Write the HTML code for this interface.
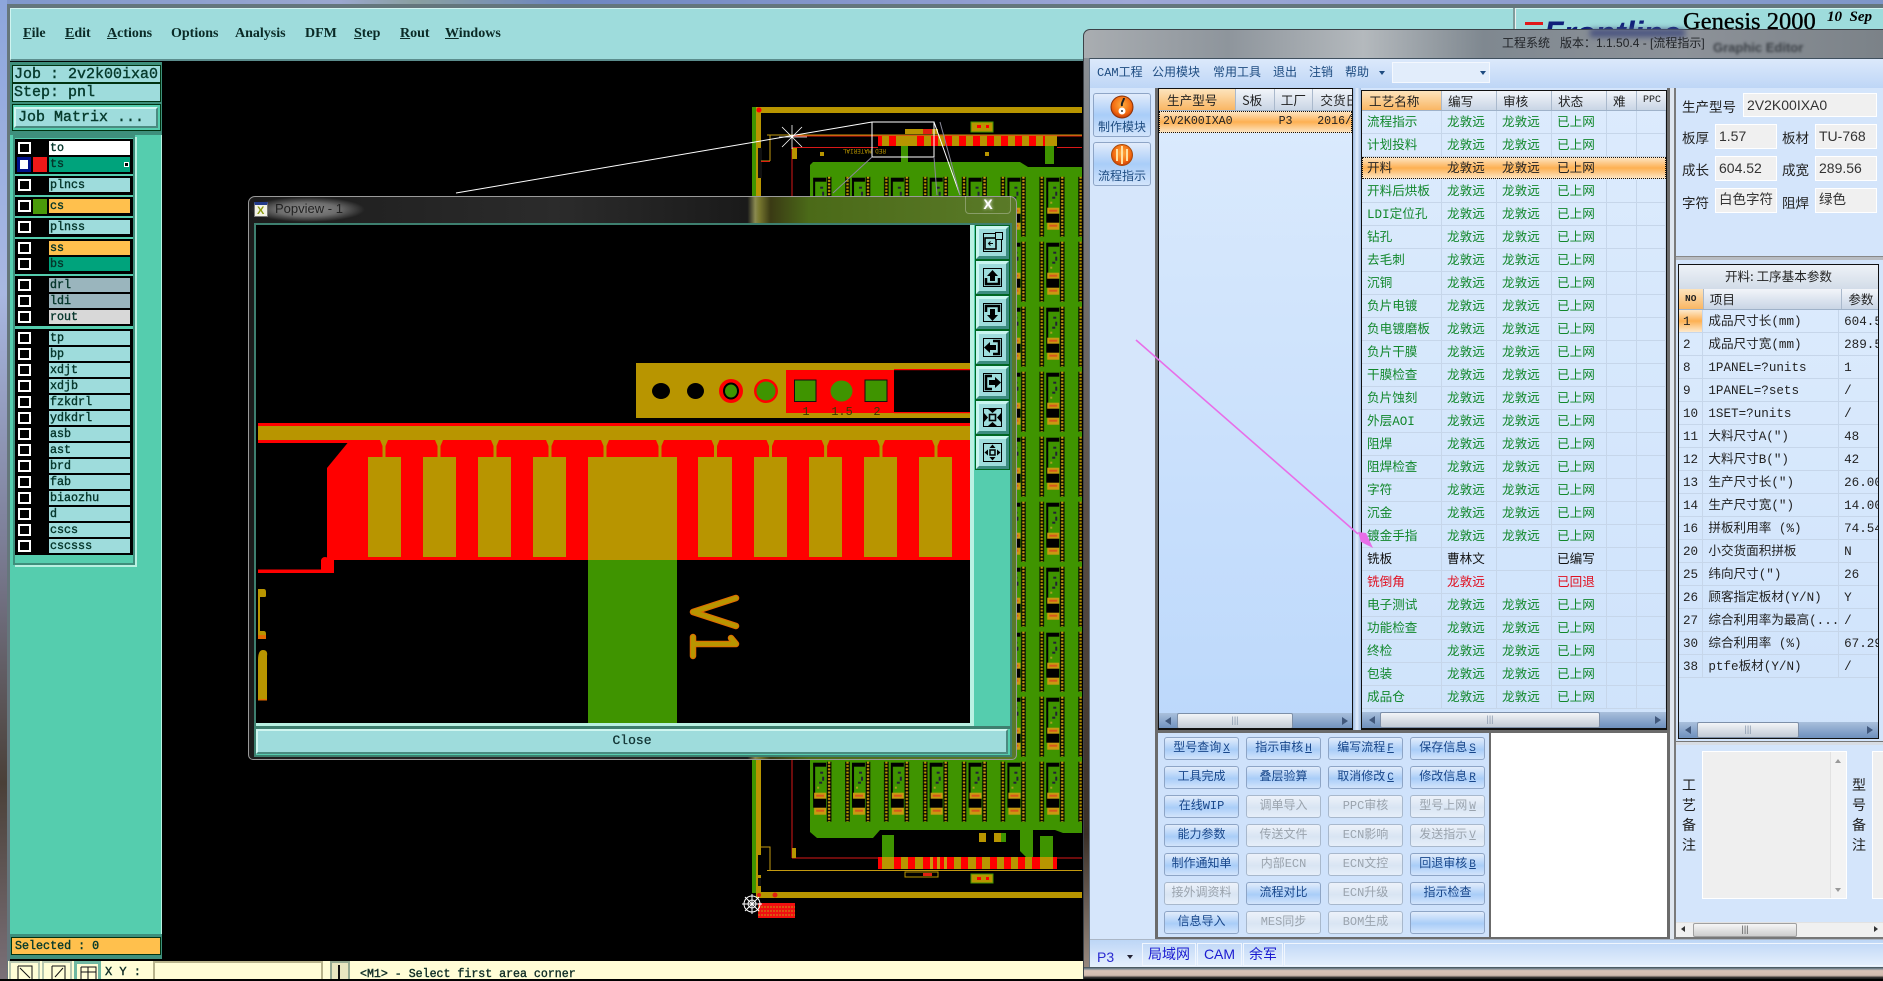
<!DOCTYPE html>
<html lang="zh"><head><meta charset="utf-8"><title>Genesis 2000</title>
<style>
*{box-sizing:border-box}
html,body{margin:0;padding:0;width:1883px;height:979px;overflow:hidden;background:#000}
.a{position:absolute}
svg.a{left:0;top:0}
.mn{position:absolute;top:25px;font:bold 14px/18px "Liberation Serif",serif;color:#0a2a26}
.mn u{text-decoration:underline}
.mono{font-family:"Liberation Mono",monospace;font-weight:normal;-webkit-text-stroke:.4px #063a2c;color:#063a2c}
.lbl{position:absolute;left:49px;width:81px;height:14px;font:normal 11.7px/14px "Liberation Mono",monospace;-webkit-text-stroke:.4px #05352a;color:#05352a;padding-left:1px;background:#9edcdc}
.cb{position:absolute;left:18px;width:13px;height:12px;border:2px solid #fff;background:#000}
.blk{position:absolute;left:15px;width:118px;background:#000}
.cn{font-family:"Liberation Mono","Noto Sans CJK SC",sans-serif}
.san{font-family:"Liberation Sans","Noto Sans CJK SC",sans-serif}
.pb{position:absolute;left:976px;width:33px;height:33px;background:#9edcdc;border:3px solid;border-color:#c9f6f0 #3d8c80 #3d8c80 #c9f6f0;outline:1px solid #062}
.pb svg{position:absolute;left:-3px;top:-3px}
.r{display:flex;height:23px;border-bottom:1px solid #c6d6ea;font:12.6px/24px "Liberation Mono","Noto Sans CJK SC",sans-serif;color:#12882c}
.r span{display:block;border-right:1px solid #c6d6ea;overflow:hidden;white-space:nowrap;padding-left:5px;height:22px}
.t2 .r span:nth-child(1){width:80px}.t2 .r span:nth-child(2),.t2 .r span:nth-child(3),.t2 .r span:nth-child(4){width:55px}.t2 .r span:nth-child(5){width:30px}.t2 .r span:nth-child(6){width:29px}
.t2 .r.k{color:#111}.t2 .r.x{color:#e01020}
.sel{background:linear-gradient(#fde9cc,#fdb052 50%,#fde9cc);color:#222!important;outline:1px dotted #111;outline-offset:-1px;height:22px;margin-bottom:1px;border-bottom:0}
.sel span{border-right-color:transparent}
.hd{display:flex;height:21px;font:12.6px/20px "Noto Sans CJK SC",sans-serif;color:#222;background:linear-gradient(#f2f5fa,#c9d5e5);border-bottom:1px solid #9fb2c9}
.hd span{display:block;border-right:1px solid #aab9cc;overflow:hidden;white-space:nowrap;padding-left:6px}
.org{background:linear-gradient(#fde4bd,#f9b664)}
.t3 .r{color:#222}
.t3 .r span:nth-child(1){width:25px}.t3 .r span:nth-child(2){width:140px}.t3 .r span:nth-child(3){width:40px;border:0}
.sb{position:absolute;height:16px;background:linear-gradient(#a9bfdc,#6e90bd)}
.th{position:absolute;top:0;height:16px;background:linear-gradient(#f2f4f7,#c2cbd6);border:1px solid #7d8fa8;border-radius:2px;color:#8898ac;font:9px/13px "Liberation Sans",sans-serif;text-align:center}
.ar{position:absolute;top:4px;width:0;height:0;border:4px solid transparent}
.L{border-right:6px solid #41587c;border-left:0}.Rr{border-left:6px solid #41587c;border-right:0}
.btn{position:absolute;width:75px;height:23px;border:1px solid #8ea5c6;border-radius:3px;background:linear-gradient(#e2ecfb,#a9cdf8 55%,#d2e4fb);color:#17468a;font:12px/21px "Liberation Mono","Noto Sans CJK SC",sans-serif;text-align:center;white-space:nowrap}
.btn.d{background:linear-gradient(#edf2fa,#d9e5f3 55%,#e6eef9);color:#9aa3ad;border-color:#a8b8cc}
.btn u{font-size:11px;margin-left:2px}
.lb{position:absolute;font:13.5px/18px "Noto Sans CJK SC",sans-serif;color:#222;white-space:nowrap}
.ip{position:absolute;background:#f0f0f0;border:1px solid #fff;font:14px/22px "Liberation Sans","Noto Sans CJK SC",sans-serif;color:#333;padding-left:3px;white-space:nowrap;overflow:hidden}
.mt{position:absolute;top:64px;font:12px/18px "Liberation Mono","Noto Sans CJK SC",sans-serif;color:#1d4b80;white-space:nowrap}
</style></head><body>

<!-- desktop edges -->
<div class="a" style="left:0;top:0;width:1883px;height:4px;background:linear-gradient(90deg,#7f97cc,#9aa7cf 18%,#8aa0a0 22%,#6d86c0 30%,#9ea7d6 60%,#7e96c8)"></div>
<div class="a" style="left:0;top:4px;width:1883px;height:4px;background:#64767c"></div>
<div class="a" style="left:0;top:0;width:7px;height:979px;background:linear-gradient(#8da6dc,#a9b8e2 30%,#7d7f98 55%,#4a4038 80%,#7a7078)"></div>
<div class="a" style="left:7px;top:4px;width:3px;height:975px;background:#66767c"></div>

<!-- menu -->
<div class="a" style="left:10px;top:8px;width:1873px;height:53px;background:#9edcdc;border-top:1px solid #d0f4f0;border-left:1px solid #d0f4f0;border-bottom:2px solid #5c8e8e"></div>
<div class="mn" style="left:23px"><u>F</u>ile</div>
<div class="mn" style="left:65px"><u>E</u>dit</div>
<div class="mn" style="left:107px"><u>A</u>ctions</div>
<div class="mn" style="left:171px">Options</div>
<div class="mn" style="left:235px">Analysis</div>
<div class="mn" style="left:305px">DFM</div>
<div class="mn" style="left:354px"><u>S</u>tep</div>
<div class="mn" style="left:400px"><u>R</u>out</div>
<div class="mn" style="left:445px"><u>W</u>indows</div>
<div class="a" style="left:1513px;top:8px;width:3px;height:24px;background:#7f9c9c;border-right:1px solid #eee"></div>
<div class="a" style="left:1544px;top:15px;font:italic bold 32px/36px 'Liberation Sans',sans-serif;color:#10207a;white-space:nowrap">Frontline</div>
<div class="a" style="left:1525px;top:22px;width:18px;height:3px;background:#e01a1a"></div>
<div class="a" style="left:1683px;top:8px;font:24.5px/28px 'Liberation Serif',serif;color:#000;-webkit-text-stroke:.35px #000;white-space:nowrap">Genesis 2000</div>
<div class="a" style="left:1827px;top:8px;font:italic bold 15px/18px 'Liberation Serif',serif;color:#000;white-space:pre">10  Sep</div>

<!-- left panel -->
<div class="a" style="left:10px;top:62px;width:153px;height:897px;background:#55cdae;border-right:2px solid #b9f1e2"></div>
<div class="a" style="left:10px;top:62px;width:153px;height:73px;background:#3e8f7c"></div>
<div class="a mono" style="left:12px;top:65px;width:149px;height:18px;background:#9edcdc;border:1px solid #031;font-size:15px;line-height:17px;padding-left:1px;white-space:pre">Job : 2v2k00ixa0</div>
<div class="a mono" style="left:12px;top:83px;width:149px;height:19px;background:#9edcdc;border:1px solid #031;font-size:15px;line-height:17px;padding-left:1px;white-space:pre">Step: pnl</div>
<div class="a" style="left:12px;top:104px;width:149px;height:27px;background:#55cdae;border:1px solid #031"></div>
<div class="a mono" style="left:14px;top:107px;width:144px;height:21px;background:#9edcdc;border:2px solid;border-color:#d0f6f0 #4a8a80 #4a8a80 #d0f6f0;font-size:15px;line-height:17px;padding-left:2px;white-space:pre">Job Matrix ...</div>

<div class="a" style="left:13px;top:135px;width:122px;height:430px;background:#55cdae;border:2px solid #3e8f7c;border-top-width:3px;box-shadow:2px 2px 0 #b9f1e2"></div>
<div class="blk" style="top:139px;height:35px"></div>
<div class="blk" style="top:176px;height:19px"></div>
<div class="blk" style="top:197px;height:19px"></div>
<div class="blk" style="top:218px;height:19px"></div>
<div class="blk" style="top:239px;height:35px"></div>
<div class="blk" style="top:276px;height:50px"></div>
<div class="blk" style="top:329px;height:226px"></div>

<div class="cb" style="top:142px"></div><div class="lbl" style="top:141px;background:#fff">to</div>
<div class="a" style="left:17px;top:157px;width:14px;height:15px;background:#00108a;padding:3px"><div style="width:8px;height:9px;background:#fff"></div></div>
<div class="a" style="left:33px;top:157px;width:14px;height:15px;background:#f01818"></div>
<div class="lbl" style="top:157px;height:15px;background:#00a37c">ts</div>
<div class="a" style="left:124px;top:162px;width:5px;height:5px;border:1px solid #fff;background:#000"></div>
<div class="cb" style="top:179px"></div><div class="lbl" style="top:178px">plncs</div>
<div class="cb" style="top:200px"></div><div class="a" style="left:33px;top:199px;width:14px;height:15px;background:#4a9a0a"></div><div class="lbl" style="top:199px;background:#ffc04d">cs</div>
<div class="cb" style="top:221px"></div><div class="lbl" style="top:220px">plnss</div>
<div class="cb" style="top:242px"></div><div class="lbl" style="top:241px;background:#ffc04d">ss</div>
<div class="cb" style="top:258px"></div><div class="lbl" style="top:257px;background:#00a37c">bs</div>
<div class="cb" style="top:279px"></div><div class="lbl" style="top:278px;background:#9ab5bd">drl</div>
<div class="cb" style="top:295px"></div><div class="lbl" style="top:294px;background:#9ab5bd">ldi</div>
<div class="cb" style="top:311px"></div><div class="lbl" style="top:310px;background:#d8d8d8">rout</div>

<div class="cb" style="top:332px"></div><div class="lbl" style="top:331px">tp</div>
<div class="cb" style="top:348px"></div><div class="lbl" style="top:347px">bp</div>
<div class="cb" style="top:364px"></div><div class="lbl" style="top:363px">xdjt</div>
<div class="cb" style="top:380px"></div><div class="lbl" style="top:379px">xdjb</div>
<div class="cb" style="top:396px"></div><div class="lbl" style="top:395px">fzkdrl</div>
<div class="cb" style="top:412px"></div><div class="lbl" style="top:411px">ydkdrl</div>
<div class="cb" style="top:428px"></div><div class="lbl" style="top:427px">asb</div>
<div class="cb" style="top:444px"></div><div class="lbl" style="top:443px">ast</div>
<div class="cb" style="top:460px"></div><div class="lbl" style="top:459px">brd</div>
<div class="cb" style="top:476px"></div><div class="lbl" style="top:475px">fab</div>
<div class="cb" style="top:492px"></div><div class="lbl" style="top:491px">biaozhu</div>
<div class="cb" style="top:508px"></div><div class="lbl" style="top:507px">d</div>
<div class="cb" style="top:524px"></div><div class="lbl" style="top:523px">cscs</div>
<div class="cb" style="top:540px"></div><div class="lbl" style="top:539px">cscsss</div>

<div class="a" style="left:10px;top:934px;width:153px;height:25px;background:#3e8f7c"></div>
<div class="a mono" style="left:11px;top:937px;width:150px;height:18px;background:#ffc04d;border:1px solid #031;font-size:11.7px;line-height:16px;padding-left:3px;white-space:pre">Selected : 0</div>

<!-- PCB canvas -->
<svg class="a" width="1883" height="979" viewBox="0 0 1883 979" style="z-index:1">
<defs>
<pattern id="pm" x="844" y="176.7" width="38.85" height="65" patternUnits="userSpaceOnUse">
<line x1="3.5" y1="0" x2="3.5" y2="60" stroke="#000" stroke-width="4.5"/>
<line x1="3.5" y1="0" x2="3.5" y2="60" stroke="#b89500" stroke-width="2.4" stroke-dasharray="2 1.3"/>
<line x1="24" y1="0" x2="24" y2="60" stroke="#000" stroke-width="4.5"/>
<line x1="24" y1="0" x2="24" y2="60" stroke="#c89a10" stroke-width="2.4" stroke-dasharray="2 1.3"/>
<rect x="8" y="1" width="13" height="4" fill="#000"/>
<rect x="8" y="1" width="2" height="38" fill="#000"/>
<rect x="9" y="31" width="12" height="6" fill="#c89a10"/>
<rect x="11" y="33" width="8" height="2" fill="#d8581a"/>
<rect x="8" y="37" width="13" height="9" fill="#000"/>
<rect x="9" y="46" width="12" height="7" fill="#c89a10"/>
<rect x="11" y="48" width="8" height="2" fill="#d8581a"/>
<rect x="15" y="10" width="3" height="2" fill="#223"/><rect x="17" y="15" width="2" height="4" fill="#223"/><rect x="14" y="20" width="3" height="2" fill="#223"/><rect x="12" y="25" width="2" height="2" fill="#a8a020"/>
</pattern>
<pattern id="st" x="878" y="0" width="14" height="10" patternUnits="userSpaceOnUse"><rect width="14" height="10" fill="#f00"/><rect x="4" width="7" height="10" fill="#b89500"/></pattern>
</defs>
<rect x="162" y="62" width="930" height="899" fill="#000"/>
<!-- frame -->
<rect x="756" y="107" width="326" height="6" fill="#b89500"/>
<rect x="752" y="107" width="4" height="786" fill="#3f9400"/>
<rect x="756" y="113" width="5" height="780" fill="#b89500"/>
<rect x="756" y="892" width="326" height="6" fill="#b89500"/>
<circle cx="759" cy="110" r="2.5" fill="#f00"/><circle cx="775" cy="895" r="2.5" fill="#e02010"/><circle cx="759" cy="895" r="2" fill="#e02010"/>
<rect x="758" y="855" width="4" height="20" fill="#000"/><rect x="758" y="878" width="3" height="8" fill="#111"/><rect x="758" y="148" width="4" height="30" fill="#111"/>
<!-- thin traces -->
<path d="M767 135H1082" stroke="#c49a10" stroke-width="1"/><path d="M790 136H1082" stroke="#e02010" stroke-width="1"/>
<path d="M770 135V161M761 161H770" stroke="#c49a10" fill="none"/><path d="M761 161.5H770" stroke="#e02010"/>
<path d="M792 148V858M792 147.5H878M1057 147.5H1082M792 858H878M1057 858H1082" stroke="#d81818" fill="none"/>
<path d="M767 870.5H1082" stroke="#c49a10"/>
<path d="M761 847H770V870M770 847V870" stroke="#c49a10" fill="none"/>
<rect x="792" y="148" width="5" height="11" fill="#b89500"/><rect x="792" y="848" width="4" height="10" fill="#b89500"/>
<!-- top fingers -->
<rect x="878" y="136" width="179" height="10" fill="url(#st)"/>
<rect x="903" y="136" width="8" height="10" fill="#b89500"/><rect x="1045" y="136" width="9" height="10" fill="#b89500"/>
<rect x="901" y="146" width="7" height="17" fill="#3f9400"/><rect x="1045" y="146" width="9" height="18" fill="#3f9400"/>
<rect x="905" y="129" width="33" height="5" fill="#b89500"/><rect x="923" y="129" width="9" height="5" fill="#e02010"/>
<rect x="971" y="122" width="22" height="10" fill="#b89500" stroke="#3f9400"/><rect x="977" y="125" width="4" height="3" fill="#f00"/><rect x="986" y="125" width="3" height="3" fill="#f00"/>
<rect x="820" y="152" width="4" height="4" fill="#b89500"/><rect x="985" y="152" width="4" height="4" fill="#b89500"/>
<text x="838" y="155" font-family="Liberation Mono,monospace" font-size="6" fill="#b89500" transform="rotate(180 862 152)">RED MATERIAL</text>
<!-- board -->
<path d="M813 162H1020L1028 167H1082V833H1063L1055 830H1033V857H1026L1020 851V830H880L873 838H817L810 832V165Z" fill="#3f9400"/>
<rect x="812" y="176.7" width="270" height="646.5" fill="url(#pm)"/>
<!-- bottom fingers -->
<rect x="878" y="857" width="179" height="12" fill="#f00"/>
<rect x="882" y="857" width="12" height="12" fill="#b89500"/><rect x="901" y="857" width="7" height="12" fill="#b89500"/><rect x="915" y="857" width="8" height="12" fill="#b89500"/><rect x="930" y="857" width="3" height="12" fill="#c89a10"/><rect x="937" y="857" width="3" height="12" fill="#c89a10"/><rect x="944" y="857" width="3" height="12" fill="#c89a10"/><rect x="954" y="857" width="7" height="12" fill="#b89500"/><rect x="968" y="857" width="8" height="12" fill="#b89500"/><rect x="982" y="857" width="8" height="12" fill="#b89500"/><rect x="997" y="857" width="7" height="12" fill="#b89500"/><rect x="1011" y="857" width="7" height="12" fill="#b89500"/><rect x="1025" y="857" width="7" height="12" fill="#b89500"/><rect x="1040" y="857" width="13" height="12" fill="#b89500"/>
<rect x="882" y="835" width="12" height="22" fill="#3f9400"/><rect x="1040" y="836" width="13" height="21" fill="#3f9400"/>
<rect x="979" y="833" width="7" height="9" fill="#b89500"/><rect x="994" y="833" width="7" height="9" fill="#b89500"/><rect x="1001" y="833" width="5" height="9" fill="#3f9400"/>
<rect x="905" y="872" width="33" height="5" fill="none" stroke="#b89500"/><rect x="923" y="873" width="9" height="3" fill="#e02010"/>
<rect x="971" y="874" width="22" height="9" fill="#b89500" stroke="#3f9400"/><rect x="977" y="877" width="4" height="3" fill="#f00"/><rect x="986" y="877" width="3" height="3" fill="#f00"/>
<rect x="758" y="903" width="37" height="15" fill="#f01010"/>
<path d="M758 907H795M758 911H795M758 915H795" stroke="#c89a10" stroke-dasharray="2 1"/>
<!-- cursor -->
<g stroke="#fff" fill="none"><circle cx="752" cy="904" r="8"/><circle cx="752" cy="904" r="4"/><path d="M742 904H762M752 894V914M745 897L759 911M759 897L745 911"/></g>
<!-- selection -->
<g stroke="#fff" fill="none" stroke-width="1"><path d="M456 193L872 122H934V157H872V122M934 122L960 195"/><path d="M779 137H807M792 125V149M782 127L802 147M802 127L782 147" stroke-width=".8"/></g>
<path d="M872 157L833 193M934 157L937 195M940 122L960 195" stroke="#8a8a9a" fill="none" stroke-width="1"/>
</svg>

<!-- bottom bar -->
<div class="a" style="left:8px;top:961px;width:1080px;height:18px;background:#fffdd6;z-index:2"></div>
<div class="a" style="left:9px;top:961px;width:31px;height:18px;background:#fffdd6;border:2px solid #b7c7b0;border-bottom:0;z-index:2"></div>
<div class="a" style="left:42px;top:961px;width:30px;height:18px;background:#fffdd6;border:2px solid #b7c7b0;border-bottom:0;z-index:2"></div>
<div class="a" style="left:74px;top:961px;width:27px;height:18px;background:#fffdd6;border:3px solid #6fb8a2;border-bottom:0;z-index:2"></div>
<svg class="a" width="110" height="18" viewBox="0 0 110 18" style="left:9px;top:961px;z-index:3" fill="none" stroke="#111"><path d="M9 5H23V18M9 5V18M11 7L21 17"/><path d="M43 5H56V18M43 5V18M46 16L54 7"/><path d="M72 6H87V18M72 6V18M79 6V18M72 11H87"/></svg>
<div class="a mono" style="left:105px;top:966px;font-size:12px;line-height:13px;color:#222;z-index:3;white-space:pre">X Y :</div>
<div class="a" style="left:153px;top:961px;width:170px;height:18px;background:#fffdd6;border:2px solid #b8b48c;border-bottom:0;z-index:2"></div>
<div class="a" style="left:330px;top:961px;width:20px;height:18px;background:#e8e6c0;border:2px solid #94a890;border-bottom:0;z-index:2"></div>
<div class="a" style="left:338px;top:965px;width:2px;height:14px;background:#111;z-index:3"></div>
<div class="a mono" style="left:360px;top:968px;font-size:11.6px;line-height:13px;color:#222;z-index:3;white-space:pre">&lt;M1&gt; - Select first area corner</div>

<!-- POPUP -->
<div class="a" style="left:248px;top:196px;width:769px;height:564px;border-radius:7px 7px 5px 5px;border:1px solid #9a9a9a;background:linear-gradient(90deg,#1c1c1c,#2b2b2b 40%,#1a1a1a 65%,#8a8a50 66%,#7a7a30 66.5%,#3a3a14 68%,#4b6a18 73%,#5a7a28 100%);z-index:4"></div>
<div class="a" style="left:250px;top:197px;width:115px;height:25px;background:radial-gradient(closest-side,#8a8a8a 0,#6c6c6c 55%,rgba(60,60,60,0) 100%);z-index:4"></div>
<div class="a" style="left:254px;top:202px;width:14px;height:15px;background:#f3f3e6;border:1px solid #777;border-top:3px solid #223a8a;z-index:5"></div>
<div class="a" style="left:257px;top:206px;font:bold 11px/10px 'Liberation Sans',sans-serif;color:#8a9a10;z-index:5">X</div>
<div class="a" style="left:275px;top:199px;font:13px/20px 'Liberation Sans',sans-serif;color:#222;z-index:5">Popview - 1</div>
<div class="a" style="left:965px;top:196px;width:46px;height:18px;border:1px solid rgba(230,230,230,.35);border-top:0;border-radius:0 0 4px 4px;z-index:5;color:#fff;font:bold 14px/16px 'Liberation Sans',sans-serif;text-align:center;text-shadow:0 0 3px #fff">X</div>
<div class="a" style="left:254px;top:223px;width:758px;height:534px;background:#55cdae;border:2px solid #3e7f6f;z-index:5"></div>
<div class="a" style="left:256px;top:225px;width:754px;height:504px;background:#000;border-right:0;z-index:5"></div>
<div class="a" style="left:970px;top:225px;width:4px;height:503px;background:#b9f1e2;z-index:5"></div>
<div class="a" style="left:974px;top:225px;width:36px;height:503px;background:#55cdae;z-index:5"></div>
<div class="a" style="left:256px;top:723px;width:718px;height:3px;background:#b9f1e2;z-index:5"></div>
<div class="a" style="left:256px;top:726px;width:754px;height:3px;background:#3e7f6f;z-index:5"></div>
<div class="a" style="left:256px;top:729px;width:752px;height:25px;background:#9edcdc;border:2px solid;border-color:#d0f6f0 #4a8a80 #4a8a80 #d0f6f0;z-index:5;text-align:center;font:normal 13px/20px 'Liberation Mono',monospace;-webkit-text-stroke:.3px #133;color:#133">Close</div>

<svg class="a" width="1883" height="979" viewBox="0 0 1883 979" style="z-index:6">
<defs><clipPath id="pc"><rect x="258" y="226" width="712" height="497"/></clipPath></defs>
<g clip-path="url(#pc)">
<rect x="258" y="226" width="712" height="497" fill="#000"/>
<rect x="636" y="363" width="334" height="55" fill="#b89500"/>
<rect x="786" y="370" width="108" height="43" fill="#f00"/>
<rect x="894" y="370" width="76" height="42" fill="#000"/>
<rect x="894" y="369" width="76" height="1.2" fill="#f00"/><rect x="894" y="412" width="76" height="1.2" fill="#f00"/>
<ellipse cx="661" cy="391" rx="9" ry="8" fill="#000"/><ellipse cx="695.5" cy="391" rx="8.5" ry="8" fill="#000"/>
<ellipse cx="731" cy="391" rx="12" ry="12" fill="#f00"/><ellipse cx="731" cy="391" rx="8" ry="8.5" fill="#000"/><ellipse cx="731" cy="391" rx="6" ry="6.5" fill="#3f9400"/>
<ellipse cx="766" cy="391" rx="12" ry="12" fill="#f00"/><ellipse cx="766" cy="391" rx="9.5" ry="9.5" fill="#3f9400"/>
<rect x="794.5" y="380" width="21.5" height="21.5" fill="#3f9400" stroke="#111"/>
<ellipse cx="841.5" cy="391" rx="11" ry="10.5" fill="#3f9400"/>
<rect x="865" y="380" width="22" height="21.5" fill="#3f9400" stroke="#111"/>
<g font-family="Liberation Mono,monospace" font-size="12" fill="#3a3a00" text-anchor="middle"><text x="806" y="415">1</text><text x="842" y="415">1.5</text><text x="877" y="415">2</text></g>
<rect x="258" y="423" width="712" height="3" fill="#f00"/>
<rect x="258" y="426" width="712" height="14" fill="#b89500"/>
<rect x="258" y="440" width="92" height="3" fill="#f00"/>
<path d="M350 440H970V560H327V468Z" fill="#f00"/>
<rect x="321" y="560" width="13" height="13" fill="#f00"/><circle cx="325" cy="561" r="4" fill="#f00"/>
<rect x="258" y="569.5" width="76" height="3.5" fill="#f00"/>
<g fill="#b89500">
<rect x="368" y="457" width="33" height="100"/><rect x="423" y="457" width="33" height="100"/><rect x="478" y="457" width="33" height="100"/><rect x="533" y="457" width="33" height="100"/>
<rect x="588" y="457" width="89" height="103"/>
<rect x="698" y="457" width="34" height="100"/><rect x="754" y="457" width="33" height="100"/><rect x="809" y="457" width="33" height="100"/><rect x="864" y="457" width="33" height="100"/><rect x="919" y="457" width="33" height="100"/>
<path d="M380 440h8l-2.500 6v11h-3v-11zM435 440h8l-2.500 6v11h-3v-11zM491 440h8l-2.500 6v11h-3v-11zM546 440h8l-2.500 6v11h-3v-11zM601 440h8l-2.500 6v17h-3v-17zM656 440h8l-2.500 6v17h-3v-17zM711.500 440h8l-2.500 6v11h-3v-11zM766.500 440h8l-2.500 6v11h-3v-11zM821.600 440h8l-2.500 6v11h-3v-11zM877 440h8l-2.500 6v11h-3v-11zM932 440h8l-2.500 6v11h-3v-11z"/>
</g>
<rect x="588" y="560" width="89" height="163" fill="#3f9400"/>
<g fill="none" stroke-linecap="round" stroke-linejoin="round">
<path d="M736 598L693 612L736 626M736 644H693M693 637V656M736 644L731 638" stroke="#e26a00" stroke-width="6.500"/>
<path d="M736 598L693 612L736 626M736 644H693M693 637V656M736 644L731 638" stroke="#b89500" stroke-width="4.500"/>
</g>
<path d="M258 589h6q2 0 2 3v4q0 1-2 1h-4v34h4q2 0 2 3v4q0 1-2 1h-6z" fill="#b89500"/>
<rect x="258" y="635" width="8" height="4" fill="#e26a00"/>
<path d="M258 660q0-10 5-10t4 6v44h-9z" fill="#b89500"/>
<rect x="258" y="699" width="9" height="1.500" fill="#e26a00"/>
</g>
</svg>

<!-- popup side buttons -->
<div class="pb" style="top:226px;z-index:7"><svg width="33" height="33" viewBox="0 0 33 33" fill="none" stroke="#000"><rect x="7.500" y="7.500" width="18" height="18"/><rect x="9" y="12" width="11" height="11" stroke-width="1.600"/><rect x="19.500" y="6.500" width="7" height="7" fill="#9edcdc"/><path d="M17 17.500H13M14.500 15.500L12.500 17.500L14.500 19.500"/></svg></div>
<div class="pb" style="top:261px;z-index:7"><svg width="33" height="33" viewBox="0 0 33 33"><rect x="7.500" y="7.500" width="18" height="18" fill="none" stroke="#000"/><path d="M10 17V23H23V17" fill="none" stroke="#000" stroke-width="2.500"/><path d="M16.500 9L22 15H19V20H14V15H11Z"/></svg></div>
<div class="pb" style="top:296px;z-index:7"><svg width="33" height="33" viewBox="0 0 33 33"><rect x="7.500" y="7.500" width="18" height="18" fill="none" stroke="#000"/><path d="M10 16V10H23V16" fill="none" stroke="#000" stroke-width="2.500"/><path d="M16.500 25L22 19H19V13H14V19H11Z"/></svg></div>
<div class="pb" style="top:331px;z-index:7"><svg width="33" height="33" viewBox="0 0 33 33"><rect x="7.500" y="7.500" width="18" height="18" fill="none" stroke="#000"/><path d="M17 10H23V23H17" fill="none" stroke="#000" stroke-width="2.500"/><path d="M8 16.500L14 11V14H20V19H14V22Z"/></svg></div>
<div class="pb" style="top:366px;z-index:7"><svg width="33" height="33" viewBox="0 0 33 33"><rect x="7.500" y="7.500" width="18" height="18" fill="none" stroke="#000"/><path d="M16 10H10V23H16" fill="none" stroke="#000" stroke-width="2.500"/><path d="M25 16.500L19 11V14H13V19H19V22Z"/></svg></div>
<div class="pb" style="top:401px;z-index:7"><svg width="33" height="33" viewBox="0 0 33 33"><rect x="7.500" y="7.500" width="18" height="18" fill="none" stroke="#000"/><rect x="13.500" y="13.500" width="6" height="6" fill="none" stroke="#000" stroke-width="1.600"/><path d="M12 8H21L16.500 12ZM12 25H21L16.500 21ZM8 12V21L12 16.500ZM25 12V21L21 16.500Z"/></svg></div>
<div class="pb" style="top:436px;z-index:7"><svg width="33" height="33" viewBox="0 0 33 33"><rect x="7.500" y="7.500" width="18" height="18" fill="none" stroke="#000"/><rect x="14" y="14" width="5" height="5" fill="none" stroke="#000" stroke-width="1.500"/><path d="M16.500 8.500L13.500 12H19.500ZM16.500 24.500L13.500 21H19.500ZM8.500 16.500L12 13.500V19.500ZM24.500 16.500L21 13.500V19.500Z"/></svg></div>

<!-- RIGHT WINDOW -->
<div class="a" style="left:1083px;top:29px;width:800px;height:950px;border-top-left-radius:7px;border:1px solid #3c4248;border-right:0;border-bottom:0;background:linear-gradient(90deg,#a9adb1,#8e959c 18%,#b4b9bd 35%,#7f8890 50%,#8d9299 75%,#7b8288);z-index:8"></div>
<div class="a" style="left:1590px;top:29px;width:95px;height:8px;background:#4a5480;filter:blur(3px);z-index:8"></div>
<div class="a" style="left:1713px;top:40px;font:bold 13px/16px 'Liberation Sans',sans-serif;color:#3a3f45;filter:blur(1.300px);z-index:8">Graphic Editor</div>
<div class="a" style="left:1502px;top:34px;font:12px/18px 'Liberation Sans','Noto Sans CJK SC',sans-serif;color:#1f2226;white-space:pre;z-index:9">工程系统   版本：1.1.50.4 - [流程指示]</div>
<div class="a" style="left:1084px;top:58px;width:5px;height:913px;background:linear-gradient(#8a8f94,#5a5048 50%,#3a3028 85%,#988a80);z-index:8"></div>
<div class="a" style="left:1089px;top:58px;width:794px;height:909px;background:#d4e5fb;border-top:1px solid #40505e;border-left:1px solid #6a7a8a;z-index:9"></div>
<!-- menu strip -->
<div class="a" style="left:1090px;top:59px;width:793px;height:29px;background:linear-gradient(#dce9fb,#bed6f6);z-index:10"></div>
<div class="mt" style="left:1097px;z-index:11">CAM工程</div><div class="mt" style="left:1152px;z-index:11">公用模块</div><div class="mt" style="left:1213px;z-index:11">常用工具</div><div class="mt" style="left:1273px;z-index:11">退出</div><div class="mt" style="left:1309px;z-index:11">注销</div><div class="mt" style="left:1345px;z-index:11">帮助</div>
<div class="a" style="left:1379px;top:71px;border:3.500px solid transparent;border-top:4px solid #1d4b80;border-bottom:0;z-index:11"></div>
<div class="a" style="left:1392px;top:62px;width:98px;height:21px;background:#e2edfb;border:1px solid #f4f8fe;z-index:11"></div>
<div class="a" style="left:1480px;top:71px;border:3px solid transparent;border-top:4px solid #1d4b80;border-bottom:0;z-index:11"></div>

<!-- sidebar -->
<div class="a" style="left:1090px;top:88px;width:65px;height:851px;background:#d6e6fb;z-index:10"></div>
<div class="a" style="left:1093px;top:93px;width:58px;height:44px;border:1px solid #8ea5c6;border-radius:3px;background:linear-gradient(#e2ecfb,#a9cdf8 50%,#d2e4fb);z-index:11;text-align:center;font:12px/16px 'Noto Sans CJK SC',sans-serif;color:#1d4b80;padding-top:25px">制作模块</div>
<div class="a" style="left:1093px;top:142px;width:58px;height:44px;border:1px solid #8ea5c6;border-radius:3px;background:linear-gradient(#e2ecfb,#a9cdf8 50%,#d2e4fb);z-index:11;text-align:center;font:12px/16px 'Noto Sans CJK SC',sans-serif;color:#1d4b80;padding-top:25px">流程指示</div>
<svg class="a" width="60" height="100" viewBox="0 0 60 100" style="left:1093px;top:93px;z-index:12">
<defs><radialGradient id="og" cx=".5" cy=".4" r=".6"><stop offset="0" stop-color="#ffae40"/><stop offset=".7" stop-color="#f26a10"/><stop offset="1" stop-color="#c83a08"/></radialGradient></defs>
<circle cx="29" cy="14" r="11" fill="url(#og)" stroke="#8a3208"/><circle cx="29" cy="18" r="3.500" fill="#fff"/><circle cx="29" cy="18" r="1" fill="#333"/><path d="M29 13C28 9 31 8 31 5" stroke="#222" stroke-width="2" fill="none"/>
<circle cx="29" cy="62" r="10.500" fill="url(#og)" stroke="#a84a08"/><path d="M24 56V68M29 53V71M34 56V68" stroke="#ffe0a0" stroke-width="2"/>
</svg>

<!-- gray frames -->
<div class="a" style="left:1155px;top:88px;width:3px;height:851px;background:#6b6b6b;z-index:10"></div>
<div class="a" style="left:1156px;top:728px;width:515px;height:5px;background:#6b6b6b;z-index:10"></div>
<div class="a" style="left:1489px;top:733px;width:2px;height:206px;background:#6b6b6b;z-index:10"></div>
<div class="a" style="left:1667px;top:88px;width:3px;height:851px;background:#6b6b6b;z-index:10"></div>
<div class="a" style="left:1670px;top:88px;width:4px;height:851px;background:#dfe6ef;z-index:10"></div>
<div class="a" style="left:1155px;top:937px;width:515px;height:2px;background:#6b6b6b;z-index:10"></div>
<div class="a" style="left:1674px;top:256px;width:209px;height:4px;background:#b8bcc2;border-top:1px solid #888;z-index:10"></div>
<div class="a" style="left:1674px;top:741px;width:209px;height:4px;background:#d8dde4;border-top:1px solid #777;z-index:10"></div>
<div class="a" style="left:1674px;top:88px;width:2px;height:851px;background:#7a7a7a;z-index:10"></div>
<div class="a" style="left:1674px;top:937px;width:209px;height:2px;background:#777;z-index:10"></div>

<!-- table 1 -->
<div class="a" style="left:1158px;top:88px;width:195px;height:642px;background:linear-gradient(#dcebfd,#bcd8fb);border:1px solid #111;border-bottom:2px solid #111;z-index:10;overflow:hidden">
 <div class="hd" style="height:22px;line-height:21px"><span class="org" style="width:80px;padding-left:8px">生产型号</span><span style="width:40px;padding-left:6px">S板</span><span style="width:40px;padding-left:6px">工厂</span><span style="width:40px;padding-left:7px;border:0">交货日</span></div>
 <div class="sel" style="height:22px;font:11.600px/22px 'Liberation Mono',monospace;display:flex;color:#222;white-space:pre"><span style="padding-left:4px;width:120px">2V2K00IXA0</span><span style="width:40px;padding-left:4px">P3</span><span style="padding-left:4px">2016/</span></div>
 <div class="sb" style="left:0;top:624px;width:194px"><div class="th" style="left:18px;width:116px">|||</div><div class="ar L" style="left:6px"></div><div class="ar Rr" style="left:183px"></div></div>
</div>
<div class="a" style="left:1353px;top:88px;width:8px;height:642px;background:linear-gradient(90deg,#9dbbe2,#e4effd 50%,#9dbbe2);z-index:10"></div>

<!-- table 2 -->
<div class="a t2" style="left:1361px;top:90px;width:306px;height:640px;background:linear-gradient(#dcebfd,#cfe3fb);border:1px solid #111;border-bottom:2px solid #111;z-index:10;overflow:hidden">
 <div class="hd" style="height:20px"><span class="org" style="width:80px;padding-left:7px">工艺名称</span><span style="width:55px">编写</span><span style="width:55px">审核</span><span style="width:55px">状态</span><span style="width:30px">难</span><span style="width:29px;border:0;font:10px/20px 'Liberation Mono',monospace">PPC</span></div>
 <div class="r"><span>流程指示</span><span>龙敦远</span><span>龙敦远</span><span>已上网</span><span></span><span></span></div>
 <div class="r"><span>计划投料</span><span>龙敦远</span><span>龙敦远</span><span>已上网</span><span></span><span></span></div>
 <div class="r sel"><span>开料</span><span>龙敦远</span><span>龙敦远</span><span>已上网</span><span></span><span></span></div>
 <div class="r"><span>开料后烘板</span><span>龙敦远</span><span>龙敦远</span><span>已上网</span><span></span><span></span></div>
 <div class="r"><span>LDI定位孔</span><span>龙敦远</span><span>龙敦远</span><span>已上网</span><span></span><span></span></div>
 <div class="r"><span>钻孔</span><span>龙敦远</span><span>龙敦远</span><span>已上网</span><span></span><span></span></div>
 <div class="r"><span>去毛刺</span><span>龙敦远</span><span>龙敦远</span><span>已上网</span><span></span><span></span></div>
 <div class="r"><span>沉铜</span><span>龙敦远</span><span>龙敦远</span><span>已上网</span><span></span><span></span></div>
 <div class="r"><span>负片电镀</span><span>龙敦远</span><span>龙敦远</span><span>已上网</span><span></span><span></span></div>
 <div class="r"><span>负电镀磨板</span><span>龙敦远</span><span>龙敦远</span><span>已上网</span><span></span><span></span></div>
 <div class="r"><span>负片干膜</span><span>龙敦远</span><span>龙敦远</span><span>已上网</span><span></span><span></span></div>
 <div class="r"><span>干膜检查</span><span>龙敦远</span><span>龙敦远</span><span>已上网</span><span></span><span></span></div>
 <div class="r"><span>负片蚀刻</span><span>龙敦远</span><span>龙敦远</span><span>已上网</span><span></span><span></span></div>
 <div class="r"><span>外层AOI</span><span>龙敦远</span><span>龙敦远</span><span>已上网</span><span></span><span></span></div>
 <div class="r"><span>阻焊</span><span>龙敦远</span><span>龙敦远</span><span>已上网</span><span></span><span></span></div>
 <div class="r"><span>阻焊检查</span><span>龙敦远</span><span>龙敦远</span><span>已上网</span><span></span><span></span></div>
 <div class="r"><span>字符</span><span>龙敦远</span><span>龙敦远</span><span>已上网</span><span></span><span></span></div>
 <div class="r"><span>沉金</span><span>龙敦远</span><span>龙敦远</span><span>已上网</span><span></span><span></span></div>
 <div class="r"><span>镀金手指</span><span>龙敦远</span><span>龙敦远</span><span>已上网</span><span></span><span></span></div>
 <div class="r k"><span>铣板</span><span>曹林文</span><span></span><span>已编写</span><span></span><span></span></div>
 <div class="r x"><span>铣倒角</span><span>龙敦远</span><span></span><span>已回退</span><span></span><span></span></div>
 <div class="r"><span>电子测试</span><span>龙敦远</span><span>龙敦远</span><span>已上网</span><span></span><span></span></div>
 <div class="r"><span>功能检查</span><span>龙敦远</span><span>龙敦远</span><span>已上网</span><span></span><span></span></div>
 <div class="r"><span>终检</span><span>龙敦远</span><span>龙敦远</span><span>已上网</span><span></span><span></span></div>
 <div class="r"><span>包装</span><span>龙敦远</span><span>龙敦远</span><span>已上网</span><span></span><span></span></div>
 <div class="r"><span>成品仓</span><span>龙敦远</span><span>龙敦远</span><span>已上网</span><span></span><span></span></div>
 <div class="sb" style="left:0;top:621px;width:305px"><div class="th" style="left:18px;width:220px">|||</div><div class="ar L" style="left:7px"></div><div class="ar Rr" style="left:293px"></div></div>
</div>

<!-- button panel -->
<div class="a" style="left:1158px;top:733px;width:331px;height:204px;background:#cfe2fb;z-index:10"></div>
<div class="a" style="left:1491px;top:733px;width:176px;height:204px;background:#fff;z-index:10"></div>
<div style="position:absolute;left:0;top:0;z-index:11">
<div class="btn" style="left:1164px;top:737px">型号查询<u>X</u></div><div class="btn" style="left:1246px;top:737px">指示审核<u>H</u></div><div class="btn" style="left:1328px;top:737px">编写流程<u>F</u></div><div class="btn" style="left:1410px;top:737px">保存信息<u>S</u></div>
<div class="btn" style="left:1164px;top:766px">工具完成</div><div class="btn" style="left:1246px;top:766px">叠层验算</div><div class="btn" style="left:1328px;top:766px">取消修改<u>C</u></div><div class="btn" style="left:1410px;top:766px">修改信息<u>R</u></div>
<div class="btn" style="left:1164px;top:795px">在线WIP</div><div class="btn d" style="left:1246px;top:795px">调单导入</div><div class="btn d" style="left:1328px;top:795px">PPC审核</div><div class="btn d" style="left:1410px;top:795px">型号上网<u>W</u></div>
<div class="btn" style="left:1164px;top:824px">能力参数</div><div class="btn d" style="left:1246px;top:824px">传送文件</div><div class="btn d" style="left:1328px;top:824px">ECN影响</div><div class="btn d" style="left:1410px;top:824px">发送指示<u>V</u></div>
<div class="btn" style="left:1164px;top:853px">制作通知单</div><div class="btn d" style="left:1246px;top:853px">内部ECN</div><div class="btn d" style="left:1328px;top:853px">ECN文控</div><div class="btn" style="left:1410px;top:853px">回退审核<u>B</u></div>
<div class="btn d" style="left:1164px;top:882px">接外调资料</div><div class="btn" style="left:1246px;top:882px">流程对比</div><div class="btn d" style="left:1328px;top:882px">ECN升级</div><div class="btn" style="left:1410px;top:882px">指示检查</div>
<div class="btn" style="left:1164px;top:911px">信息导入</div><div class="btn d" style="left:1246px;top:911px">MES同步</div><div class="btn d" style="left:1328px;top:911px">BOM生成</div><div class="btn" style="left:1410px;top:911px"></div>
</div>

<!-- info panel -->
<div style="position:absolute;left:0;top:0;z-index:11">
<div class="lb" style="left:1682px;top:97px">生产型号</div><div class="ip" style="left:1743px;top:93px;width:134px;height:24px">2V2K00IXA0</div>
<div class="lb" style="left:1682px;top:128px">板厚</div><div class="ip" style="left:1715px;top:124px;width:62px;height:25px">1.57</div>
<div class="lb" style="left:1782px;top:128px">板材</div><div class="ip" style="left:1815px;top:124px;width:62px;height:25px">TU-768</div>
<div class="lb" style="left:1682px;top:160px">成长</div><div class="ip" style="left:1715px;top:156px;width:62px;height:25px">604.52</div>
<div class="lb" style="left:1782px;top:160px">成宽</div><div class="ip" style="left:1815px;top:156px;width:62px;height:25px">289.56</div>
<div class="lb" style="left:1682px;top:193px">字符</div><div class="ip" style="left:1715px;top:188px;width:62px;height:25px;font-size:13.500px">白色字符</div>
<div class="lb" style="left:1782px;top:193px">阻焊</div><div class="ip" style="left:1815px;top:188px;width:62px;height:25px;font-size:13.500px">绿色</div>
</div>

<!-- param table -->
<div class="a t3" style="left:1678px;top:264px;width:201px;height:475px;background:linear-gradient(#dcebfd,#cfe3fb);border:1px solid #111;z-index:11;overflow:hidden">
 <div style="height:24px;background:linear-gradient(#eef2f7,#d2dce8);text-align:center;font:12.600px/22px 'Noto Sans CJK SC',sans-serif;color:#222">开料: 工序基本参数</div>
 <div class="hd"><span class="org" style="width:25px;padding-left:6px;font:bold 9.500px/20px 'Liberation Mono',monospace">NO</span><span style="width:140px">项目</span><span style="width:36px;border:0">参数</span></div>
 <div class="r"><span class="org" style="background:linear-gradient(#fde9cc,#fdb052 50%,#fde9cc);padding-left:4px">1</span><span>成品尺寸长(mm)</span><span>604.52</span></div>
 <div class="r"><span style="padding-left:4px">2</span><span>成品尺寸宽(mm)</span><span>289.56</span></div>
 <div class="r"><span style="padding-left:4px">8</span><span>1PANEL=?units</span><span>1</span></div>
 <div class="r"><span style="padding-left:4px">9</span><span>1PANEL=?sets</span><span>/</span></div>
 <div class="r"><span style="padding-left:4px">10</span><span>1SET=?units</span><span>/</span></div>
 <div class="r"><span style="padding-left:4px">11</span><span>大料尺寸A(")</span><span>48</span></div>
 <div class="r"><span style="padding-left:4px">12</span><span>大料尺寸B(")</span><span>42</span></div>
 <div class="r"><span style="padding-left:4px">13</span><span>生产尺寸长(")</span><span>26.00</span></div>
 <div class="r"><span style="padding-left:4px">14</span><span>生产尺寸宽(")</span><span>14.00</span></div>
 <div class="r"><span style="padding-left:4px">16</span><span>拼板利用率 (%)</span><span>74.54</span></div>
 <div class="r"><span style="padding-left:4px">20</span><span>小交货面积拼板</span><span>N</span></div>
 <div class="r"><span style="padding-left:4px">25</span><span>纬向尺寸(")</span><span>26</span></div>
 <div class="r"><span style="padding-left:4px">26</span><span>顾客指定板材(Y/N)</span><span>Y</span></div>
 <div class="r"><span style="padding-left:4px">27</span><span>综合利用率为最高(...</span><span>/</span></div>
 <div class="r"><span style="padding-left:4px">30</span><span>综合利用率 (%)</span><span>67.29</span></div>
 <div class="r"><span style="padding-left:4px">38</span><span>ptfe板材(Y/N)</span><span>/</span></div>
 <div class="sb" style="left:0;top:457px;width:199px"><div class="th" style="left:18px;width:102px">|||</div><div class="ar L" style="left:6px"></div><div class="ar Rr" style="left:188px"></div></div>
</div>

<!-- notes -->
<div style="position:absolute;left:0;top:0;z-index:11">
<div class="a" style="left:1681px;top:775px;width:16px;font:14px/20px 'Noto Sans CJK SC',sans-serif;color:#222;text-align:center">工<br>艺<br>备<br>注</div>
<div class="a" style="left:1702px;top:751px;width:145px;height:148px;background:#efefef;border:1px solid #fff"></div>
<div class="a" style="left:1830px;top:752px;width:16px;height:146px;background:#f3f3f3;border-left:1px solid #e2e2e2"></div>
<div class="a" style="left:1835px;top:759px;border:3.500px solid transparent;border-bottom:4px solid #999;border-top:0"></div>
<div class="a" style="left:1835px;top:888px;border:3.500px solid transparent;border-top:4px solid #999;border-bottom:0"></div>
<div class="a" style="left:1851px;top:775px;width:16px;font:14px/20px 'Noto Sans CJK SC',sans-serif;color:#222;text-align:center">型<br>号<br>备<br>注</div>
<div class="a" style="left:1872px;top:751px;width:11px;height:148px;background:#efefef;border:1px solid #fff;border-right:0"></div>
<div class="a" style="left:1676px;top:922px;width:207px;height:15px;background:#f0f0f0;border-top:1px solid #e2e2e2"></div>
<div class="a" style="left:1693px;top:923px;width:104px;height:14px;background:linear-gradient(#f6f6f6,#cdcdcd);border:1px solid #a0a0a0;border-radius:2px;font:9px/11px 'Liberation Sans',sans-serif;text-align:center;color:#555">|||</div>
<div class="a" style="left:1681px;top:926px;border:3.500px solid transparent;border-right:4px solid #333;border-left:0"></div>
<div class="a" style="left:1874px;top:926px;border:3.500px solid transparent;border-left:4px solid #333;border-right:0"></div>
</div>

<!-- status bar -->
<div class="a" style="left:1090px;top:939px;width:793px;height:28px;background:linear-gradient(#bdd6f6,#e6f0fd);border-top:1px solid #aab6c6;z-index:10"></div>
<div class="a" style="left:1097px;top:947px;font:14px/20px 'Liberation Sans',sans-serif;color:#2a2ad0;z-index:11">P3</div>
<div class="a" style="left:1127px;top:955px;border:3.500px solid transparent;border-top:4px solid #223;border-bottom:0;z-index:11"></div>
<div class="a san" style="left:1142px;top:943px;width:54px;height:23px;border:1px solid #f0f6fe;text-align:center;font-size:14px;line-height:20px;color:#1a1ad0;z-index:11">局域网</div>
<div class="a san" style="left:1197px;top:943px;width:45px;height:23px;border:1px solid #f0f6fe;text-align:center;font-size:14px;line-height:20px;color:#1a1ad0;z-index:11">CAM</div>
<div class="a san" style="left:1243px;top:943px;width:40px;height:23px;border:1px solid #f0f6fe;text-align:center;font-size:14px;line-height:20px;color:#1a1ad0;z-index:11">余军</div>
<div class="a" style="left:1284px;top:943px;width:599px;height:23px;border:1px solid #f0f6fe;border-right:0;z-index:11"></div>
<div class="a" style="left:1084px;top:967px;width:799px;height:12px;background:linear-gradient(#3c4a50 0,#7a8a94 15%,#d8c2b6 30%,#d2bcb0 70%,#222 90%);z-index:12"></div>

<!-- pink stroke -->
<svg class="a" width="1883" height="979" viewBox="0 0 1883 979" style="z-index:13">
<path d="M1136 340L1358 534" stroke="#e86ee8" stroke-width="1.600" fill="none"/>
<path d="M1358 532L1366 533L1373 548L1361 542Z" fill="#e86ee8"/>
</svg>
</body></html>
